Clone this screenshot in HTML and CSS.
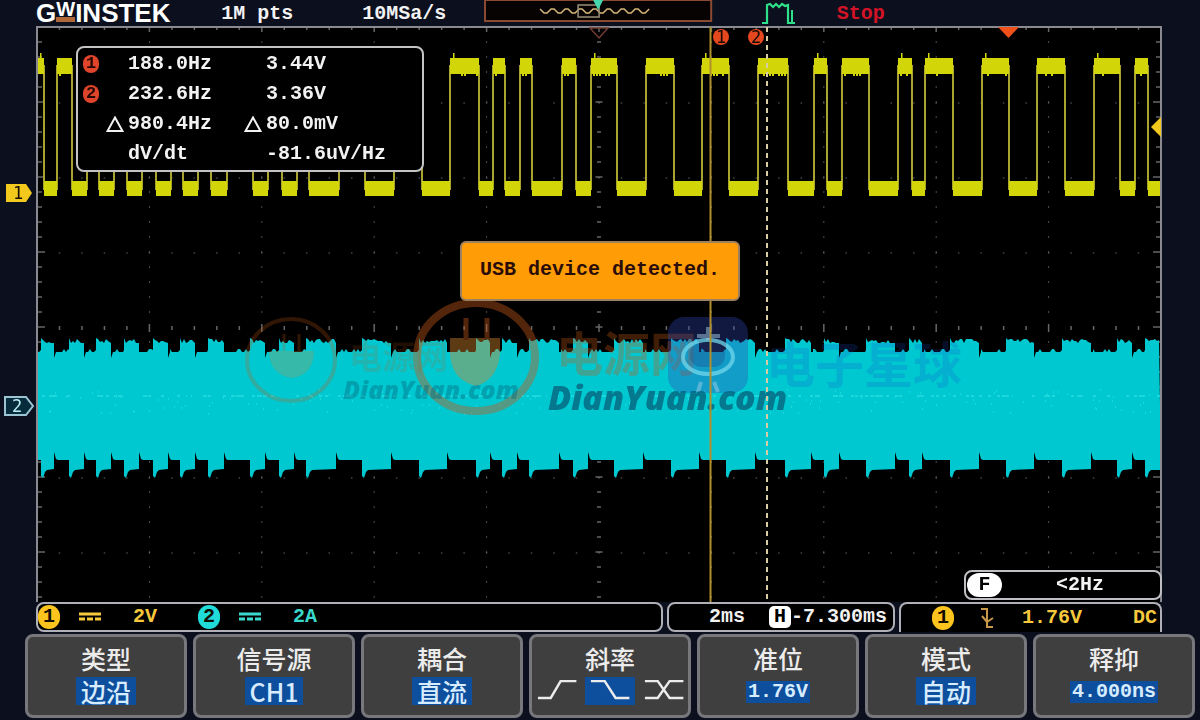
FILE: index.html
```html
<!DOCTYPE html>
<html lang="zh-CN">
<head>
<meta charset="utf-8">
<title>GW Instek</title>
<link rel="stylesheet" href="styles.css">
</head>
<body>
<header class="topbar">
  <div class="logo"><span>G</span><span class="logo-w">W</span><span>INSTEK</span></div>
  <span class="readout">1M pts</span>
  <span class="readout">10MSa/s</span>
  <svg class="nav" viewBox="0 0 228 22" aria-hidden="true">
    <rect x="1" y="0" width="226" height="21" fill="#070303" stroke="#8c4a32" stroke-width="2"/>
    <path d="M56 9l4 4h3l4-4h3l4 4h3l4-4h3l4 4h3l4-4h3l4 4h3l4-4h3l4 4h3l4-4h3l4 4h3l4-4h3l4 4h3l4-4h3l4 4h3l4-4" fill="none" stroke="#d8b878" stroke-width="1.5"/>
    <rect x="94" y="5" width="21" height="12" fill="none" stroke="#9a8f78" stroke-width="1.5"/>
    <path d="M109 0h10l-5 10z" fill="#46d6ae"/>
  </svg>
  <svg class="pulse" viewBox="0 0 36 26" aria-hidden="true">
    <path d="M1 23h5V5l3-1 3 3 3-3 3 3 3-3 3 2 3-1v18h7" fill="none" stroke="#2fe08a" stroke-width="2.2"/>
    <path d="M31 10v12" stroke="#2fe08a" stroke-width="2"/>
  </svg>
  <span class="readout stop">Stop</span>
</header>

<main class="scope">
  <svg class="plot" viewBox="0 26 1200 576">
    <rect x="37" y="27" width="1124" height="576" fill="#000"/>
    <path id="grid" fill="none" stroke="#66666a" stroke-width="1.5"/>
    <path id="edges" fill="none" stroke="#a9a42f" stroke-width="2"/>
    <path id="bands" fill="#d2d508"/>
    <path id="current" fill="#00c8d0"/>
    <path id="specks" fill="none" stroke="#1cd8dd" stroke-width="2"/>

    <g fill="none" stroke="#c65a18" opacity=".42">
      <ellipse cx="291" cy="360" rx="44" ry="41" stroke-width="4" opacity=".6"/>
      <path d="M269 351h45c0 16-8 25-22 27-14-2-23-11-23-27z" fill="#d98a30" stroke="none" opacity=".6"/>
      <path d="M284 334v17M299 334v17" stroke-width="3" opacity=".6"/>
      <ellipse cx="476" cy="357" rx="59" ry="54" stroke-width="8"/>
      <path d="M450 338h50v16c-2 18-10 28-24 32-16-4-25-14-26-32z" fill="#d98a30" stroke="none"/>
      <path d="M466 318v22M487 318v22" stroke-width="5"/>
    </g>
    <g class="brand-cn">
      <text x="349" y="369" font-size="33" fill="#c65a18" opacity=".16">电源网</text>
      <text x="556" y="371" font-size="47" fill="#c65a18" opacity=".32">电源网</text>
    </g>
    <g>
      <rect x="668" y="317" width="80" height="76" rx="16" fill="#3648bd" opacity=".34"/>
      <ellipse cx="708" cy="357" rx="25" ry="17" fill="none" stroke="#72d8ec" stroke-width="4" opacity=".75"/>
      <rect x="690" y="343" width="35" height="24" rx="11" fill="#203c79" opacity=".3"/>
      <path d="M698 392l3-10m13 0l4 10M708 327v13M697 336h23" stroke="#a0cce0" stroke-width="4" opacity=".5"/>
    </g>
    <text class="brand-cn" x="766" y="383" font-size="49" fill="#194ecb" opacity=".2">电子星球</text>
    <text class="brand-latin" x="343" y="399" font-size="25" opacity=".4">DianYuan.com</text>
    <text class="brand-latin" x="548" y="410" font-size="34" opacity=".8">DianYuan.com</text>

    <path d="M37 602V27h1124v575" fill="none" stroke="#8a8a90" stroke-width="2"/>
    <path d="M590 28h18l-9 10z" fill="none" stroke="#733c32" stroke-width="1.5"/>
    <path d="M710.500 27v575" stroke="#b0902c" stroke-width="2"/>
    <path d="M767 27v575" stroke="#d8cca4" stroke-width="2" stroke-dasharray="5 4"/>
    <g class="badge-text" text-anchor="middle">
      <circle cx="721" cy="37" r="8" fill="#e5481e"/><text x="721" y="43">1</text>
      <circle cx="756" cy="37" r="8" fill="#e5481e"/><text x="756" y="43">2</text>
      <path d="M6 184h20l6 9-6 9H6z" fill="#f3c81c"/><text x="18" y="199">1</text>
      <path d="M5 397h21l7 9-7 9H5z" fill="#062b3a" stroke="#9bc4d2" stroke-width="2"/><text class="light" x="17" y="412">2</text>
    </g>
    <path d="M998 27h21l-10.500 11z" fill="#f0501a"/>
    <path d="M1161 117v20l-10-10z" fill="#f3c81c"/>
  </svg>

  <section class="cursors">
    <table>
      <tr><td class="c-mark"><span class="dot">1</span></td><td class="c-delta"></td><td class="c-value">188.0Hz</td><td class="c-delta"></td><td>3.44V</td></tr>
      <tr><td><span class="dot">2</span></td><td></td><td>232.6Hz</td><td></td><td>3.36V</td></tr>
      <tr><td></td>
        <td><svg class="delta" viewBox="0 0 18 16"><path d="M9 1.500L16.500 15h-15z"/></svg></td><td>980.4Hz</td>
        <td><svg class="delta" viewBox="0 0 18 16"><path d="M9 1.500L16.500 15h-15z"/></svg></td><td>80.0mV</td></tr>
      <tr><td></td><td></td><td>dV/dt</td><td></td><td>-81.6uV/Hz</td></tr>
    </table>
  </section>
  <div class="toast" role="status">USB device detected.</div>
  <div class="counter"><span class="pill">F</span><span class="count">&lt;2Hz</span></div>
</main>

<section class="status">
  <div class="box channels">
    <span class="chan yellow"><b class="disc">1</b><svg class="dc" viewBox="0 0 22 10"><path d="M0 2h22M0 7h6m2 0h6m2 0h6"/></svg><span>2V</span></span>
    <span class="chan cyan"><b class="disc">2</b><svg class="dc" viewBox="0 0 22 10"><path d="M0 2h22M0 7h6m2 0h6m2 0h6"/></svg><span>2A</span></span>
  </div>
  <div class="box timebase"><span>2ms</span><span class="offset"><b class="h-mark">H</b>-7.300ms</span></div>
  <div class="box trigger yellow"><b class="disc">1</b>
    <svg class="falling" viewBox="0 0 16 22"><path d="M1 2h6v18h6M2 9l5 6 6-4"/></svg>
    <span>1.76V</span><span class="coupling">DC</span></div>
</section>

<nav class="menu">
  <button class="key"><span class="name">类型</span><span class="value">边沿</span></button>
  <button class="key"><span class="name">信号源</span><span class="value">CH1</span></button>
  <button class="key"><span class="name">耦合</span><span class="value">直流</span></button>
  <button class="key"><span class="name">斜率</span>
    <span class="slopes">
      <svg viewBox="0 0 50 28"><path d="M6 21h13L29 4h16"/></svg>
      <svg class="picked" viewBox="0 0 50 28"><path d="M6 4h14l11 17h14"/></svg>
      <svg viewBox="0 0 50 28"><path d="M6 4h13l12 17h14M6 21h13L31 4h14"/></svg>
    </span></button>
  <button class="key"><span class="name">准位</span><span class="value digits">1.76V</span></button>
  <button class="key"><span class="name">模式</span><span class="value">自动</span></button>
  <button class="key"><span class="name">释抑</span><span class="value digits">4.000ns</span></button>
</nav>
<script src="plot.js"></script>
</body>
</html>
```

FILE: styles.css
```css
* { box-sizing: border-box; }

body {
  margin: 0;
  background: #0c101e;
  color: #f2f2f2;
  font: bold 20px/24px "Liberation Mono", "Noto Sans CJK SC", monospace;
}

.topbar {
  display: grid;
  grid-template-columns: 185fr 141fr 122fr 228fr 48fr 36fr 40fr 363fr;
  padding-left: 36px;
  height: 26px;
  align-items: start;
}
.readout { padding-top: 2px; white-space: nowrap; }
.nav { width: 100%; }
.pulse { grid-column: 6; width: 100%; }
.stop { grid-column: 8; color: #d41426; }

.logo {
  display: flex;
  color: #fff;
  font: bold 26px/26px "Liberation Sans", sans-serif;
}
.logo-w {
  height: 22px;
  border-bottom: 5px solid #b0683a;
  font-size: 20px;
  line-height: 18px;
}

.scope { position: relative; }
.plot { display: block; width: 100%; }
.brand-cn { font-family: "Noto Sans CJK SC", sans-serif; font-weight: bold; }
.brand-latin { font-family: "Open Sans", sans-serif; font-weight: 800; font-style: italic; fill: #04647e; }
.badge-text { font: 17px "DejaVu Sans Mono", monospace; fill: #160c04; }
.light { fill: #b8edf2; }

.cursors {
  position: absolute;
  left: 76px;
  top: 20px;
  width: 348px;
  padding-top: 1px;
  padding-bottom: 1px;
  border: 2px solid #c4c4c4;
  border-radius: 8px;
  background: #000;
}
.cursors table { width: 100%; border-collapse: collapse; table-layout: fixed; }
.cursors td { height: 30px; padding: 0; white-space: nowrap; }
.c-mark { width: 28px; }
.c-delta { width: 22px; }
.c-value { width: 116px; }
.dot {
  display: block;
  width: 16px;
  height: 18px;
  margin-left: 5px;
  border-radius: 8px;
  background: #e0452c;
  color: #260804;
  font-size: 17px;
  line-height: 18px;
  text-align: center;
}
.delta { display: block; width: 18px; fill: none; stroke: #f2f2f2; stroke-width: 2; }

.toast {
  position: absolute;
  left: 50%;
  top: 215px;
  transform: translateX(-50%);
  padding: 15px 18px 17px;
  border: 2px solid #9c8260;
  border-radius: 6px;
  background: #ff9c06;
  color: #2a0d08;
  white-space: nowrap;
}

.counter {
  position: absolute;
  right: 38px;
  bottom: 2px;
  display: flex;
  align-items: center;
  width: 198px;
  height: 30px;
  border: 2px solid #c0c0c4;
  border-radius: 8px;
  background: #000;
}
.pill {
  width: 35px;
  margin-left: 1px;
  border-radius: 12px;
  background: #fff;
  color: #000;
  text-align: center;
}
.count { margin-left: 54px; }

.status {
  display: grid;
  grid-template-columns: 627fr 228fr 263fr;
  gap: 4px;
  height: 32px;
  padding: 0 38px 2px 36px;
}
.box {
  display: flex;
  align-items: center;
  border: 2px solid #b0b0b8;
  border-radius: 8px;
  background: #000;
  white-space: nowrap;
}
.chan { display: flex; align-items: center; width: 160px; }
.chan span { margin-left: 32px; }
.disc {
  width: 22px;
  border-radius: 11px;
  background: #fcc41c;
  color: #120c02;
  text-align: center;
}
.dc { width: 22px; margin-left: 19px; fill: none; stroke: currentColor; stroke-width: 3; }
.yellow { color: #f6c83c; }
.cyan { color: #3ad8cc; }
.cyan .disc { background: #20dcd8; }
.timebase { justify-content: space-between; padding: 0 6px 0 40px; }
.offset { display: flex; align-items: center; }
.h-mark {
  width: 22px;
  border-radius: 5px;
  background: #fff;
  color: #000;
  line-height: 22px;
  text-align: center;
}
.trigger {
  padding: 0 3px 0 31px;
  border-bottom: 0;
  border-radius: 8px 8px 0 0;
}
.falling { width: 16px; margin: 0 26px; fill: none; stroke: #c89848; stroke-width: 2; }
.coupling { margin-left: auto; }

.menu {
  display: grid;
  grid-template-columns: repeat(7, 1fr);
  gap: 6px;
  padding: 0 5px 0 25px;
}
.key {
  display: flex;
  flex-direction: column;
  align-items: center;
  gap: 6px;
  min-width: 0;
  height: 84px;
  padding: 8px 0;
  border: 3px solid #77777c;
  border-radius: 8px;
  background: #3f3f40;
  color: #ececec;
  font: 500 25px/26px "Noto Sans CJK SC", sans-serif;
}
.value {
  padding: 0 5px;
  background: #0e4f9d;
  color: #d8ecff;
  line-height: 28px;
}
.digits {
  margin-top: 4px;
  padding: 0 2px;
  font: bold 20px/22px "Liberation Mono", monospace;
}
.slopes { display: flex; justify-content: center; width: 100%; gap: 4px; }
.slopes svg { width: 50px; height: 28px; fill: none; stroke: #ececec; stroke-width: 2.5; }
.slopes .picked { background: #0e4f9d; }
```

FILE: plot.js
```js
// Intervals where channel 1 is low; everything between them is high.
const lows = [[44,57],[72,87],[99,114],[127,142],[156,171],[183,198],[211,227],[253,268],
  [282,297],[309,339],[365,394],[422,450],[479,493],[505,520],[532,562],[576,591],[617,646],
  [674,702],[729,758],[788,814],[827,842],[869,898],[912,925],[953,982],[1009,1037],
  [1065,1094],[1120,1135],[1148,1161]];
const plotLeft = 37, plotRight = 1161;

let seed = 7;
const rand = n => (seed = (seed * 16807) % 2147483647) % n;
const draw = (id, d) => document.getElementById(id).setAttribute('d', d);

// Graticule: dotted divisions, with longer ticks on the centre axes and the frame.
let grid = '';
for (let i = 0; i <= 50; i++) {
  const x = plotLeft + i * 22.48, len = i % 5 ? 4 : 8;
  grid += `M${x} 28v${len / 2}M${x} ${328 - len / 2}v${len}`;
  for (let y = 103; y < 600; y += 75) grid += `M${x} ${y - 0.5}v1`;
}
for (let i = 1; i < 39; i++) {
  const y = 27 + i * 15, len = i % 5 ? 4 : 7;
  grid += `M38 ${y}h${len}M1160 ${y}h${-len}M${599 - len / 2} ${y}h${len}`;
  for (let x = 149.4; x < 1160; x += 112.4) grid += `M${x - 0.5} ${y}h1`;
}
draw('grid', grid);

// Channel 1: thick high and low bands joined by thin edges.
let bands = '', edges = '', from = plotLeft;
for (const [a, b] of lows) {
  bands += `M${from} 58H${a}V74H${from}z M${a} 181H${b}V196H${a}z`;
  for (let x = from + 2; x < a - 2; x += 3) if (rand(3) === 0) bands += `M${x} 73h2v3h-2z`;
  if (rand(2)) bands += `M${from + 3} 53h1.500v6h-1.500z`;
  edges += `M${a} 65V190`;
  if (b < plotRight) edges += `M${b} 65V190`;
  from = b;
}
draw('bands', bands);
draw('edges', edges);

// Channel 2: ripple envelope, wider while channel 1 is low.
let upper = `M${plotLeft} 351`, lower = '', x0 = plotLeft;
for (const [a, b] of lows) {
  const last = b >= plotRight, s = a - 3, e = last ? plotRight : b - 3;
  for (let x = x0; x < s; x += 2) upper += `L${x} ${352 - (rand(4) === 0 ? 3 : 0)}`;
  upper += `L${s} 350L${s} 338`;
  for (let x = s + 2; x < e - 1; x += 2) upper += `L${x} ${339 + rand(5)}`;
  if (!last) {
    upper += `L${e} 343L${e} ${rand(2) ? 352 : 358}L${e + 2} 352`;
    lower = `L${e + 4} 460L${e + 2} 459L${e} 452L${e} 469` + lower;
  }
  lower = (last ? '' : lower.slice(0, 0)) + lower;
  const rise = `L${s + 6} 470L${s + 4} 472L${s + 2} 478L${s} 476L${s} 460`;
  lower = last ? rise + lower : lower.replace(`L${e} 469`, `L${e} 469${rise}`);
  x0 = e + 2;
}
draw('current', upper + `L${plotRight} 470` + lower + `L${plotLeft} 460z`);

let specks = '';
for (let i = 0; i < 150; i++) specks += `M${40 + rand(1118)} 396h3`;
for (let i = 0; i < 180; i++) specks += `M${40 + rand(1118)} ${390 + rand(25)}h1`;
draw('specks', specks);
```
